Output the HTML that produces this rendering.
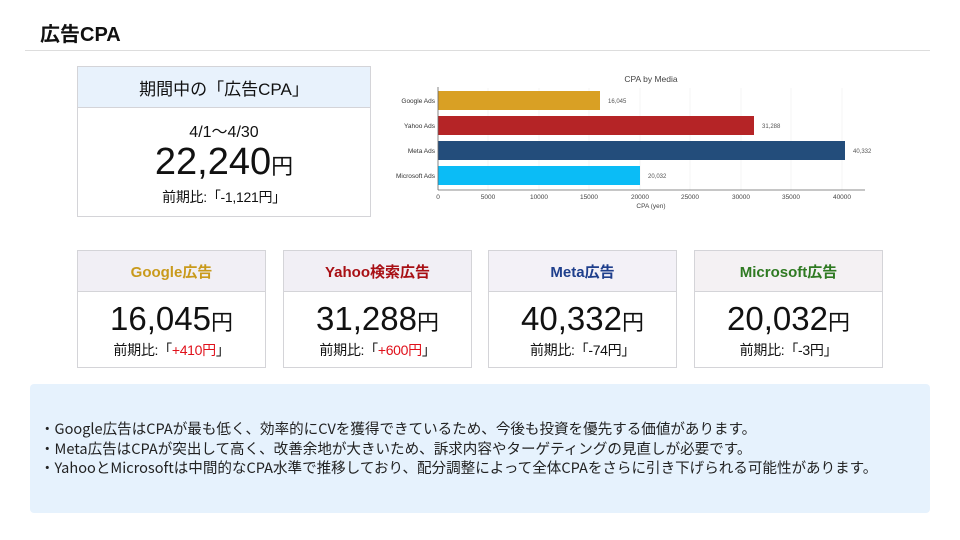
<!DOCTYPE html>
<html><head><meta charset="utf-8"><style>
*{margin:0;padding:0;box-sizing:border-box}
body{width:960px;height:540px;background:#fff;position:relative;overflow:hidden;font-family:"Liberation Sans","Noto Sans CJK JP",sans-serif;color:#111}
.abs{position:absolute}
h1{position:absolute;left:40px;top:18px;font-size:20px;font-weight:bold;font-family:"Liberation Sans","Noto Sans CJK JP",sans-serif}
.sep{position:absolute;left:25px;top:50px;width:905px;height:1px;background:#ddd}
.box{position:absolute;border:1px solid #d4d4d8;background:#fff}
.hd{height:41px;border-bottom:1px solid #d4d4d8;display:flex;align-items:center;justify-content:center;font-size:15px;font-weight:bold}
.c{text-align:center}
.num{font-size:33px;line-height:36px;margin-top:9px}
.num span{font-size:22px}
.cmp{font-size:14px;line-height:18px;margin-top:0;letter-spacing:-0.3px}
.red{color:#e0101a}
.note{position:absolute;left:30px;top:384px;width:900px;height:129px;background:#e6f2fd;border-radius:4px;padding:35px 0 0 10px;font-family:"Noto Sans CJK JP",sans-serif;font-size:14.55px;line-height:19.5px;color:#222;white-space:nowrap}
</style></head><body>
<h1>広告CPA</h1>
<div class="sep"></div>

<div class="box" style="left:77px;top:66px;width:294px;height:151px">
 <div class="hd" style="background:#e8f2fc;font-weight:normal;font-size:17px">期間中の「広告CPA」</div>
 <div class="c" style="font-size:16px;margin-top:10px">4/1～4/30</div>
 <div class="c" style="font-size:38px;line-height:40px;margin-top:0px">22,240<span style="font-size:22px">円</span></div>
 <div class="c" style="font-size:14px;margin-top:0px;letter-spacing:-0.3px">前期比:「-1,121円」</div>
</div>

<svg class="abs" style="left:380px;top:65px" width="500" height="150" font-family="Liberation Sans, sans-serif">
 <text x="271" y="17" font-size="8.5" fill="#444" text-anchor="middle">CPA by Media</text>
 <g stroke="#eee" stroke-width="0.6">
  <line x1="108" y1="23" x2="108" y2="125"/><line x1="159" y1="23" x2="159" y2="125"/><line x1="209" y1="23" x2="209" y2="125"/><line x1="260" y1="23" x2="260" y2="125"/><line x1="310" y1="23" x2="310" y2="125"/><line x1="361" y1="23" x2="361" y2="125"/><line x1="411" y1="23" x2="411" y2="125"/><line x1="462" y1="23" x2="462" y2="125"/>
 </g>
 <rect x="58" y="26" width="162" height="19" fill="#d9a024"/>
 <rect x="58" y="51" width="316" height="19" fill="#b52426"/>
 <rect x="58" y="76" width="407" height="19" fill="#234d7b"/>
 <rect x="58" y="101" width="202" height="19" fill="#0bbcf6"/>
 <line x1="58" y1="22" x2="58" y2="125" stroke="#666" stroke-width="0.8"/>
 <line x1="58" y1="125" x2="485" y2="125" stroke="#666" stroke-width="0.8"/>
 <g font-size="6.5" fill="#333" text-anchor="end">
  <text x="55" y="38">Google Ads</text><text x="55" y="63">Yahoo Ads</text><text x="55" y="88">Meta Ads</text><text x="55" y="113">Microsoft Ads</text>
 </g>
 <g font-size="6" fill="#555">
  <text x="228" y="38">16,045</text><text x="382" y="63">31,288</text><text x="473" y="88">40,332</text><text x="268" y="113">20,032</text>
 </g>
 <g font-size="6.5" fill="#444" text-anchor="middle">
  <text x="58" y="134">0</text><text x="108" y="134">5000</text><text x="159" y="134">10000</text><text x="209" y="134">15000</text><text x="260" y="134">20000</text><text x="310" y="134">25000</text><text x="361" y="134">30000</text><text x="411" y="134">35000</text><text x="462" y="134">40000</text>
  <text x="271" y="143">CPA (yen)</text>
 </g>
</svg>

<div class="box" style="left:77px;top:250px;width:189px;height:118px">
 <div class="hd" style="background:#f1eff5;color:#c99a1c">Google広告</div>
 <div class="c num">16,045<span>円</span></div>
 <div class="c cmp">前期比:「<span class="red">+410円</span>」</div>
</div>
<div class="box" style="left:283px;top:250px;width:189px;height:118px">
 <div class="hd" style="background:#f1eff5;color:#a80f14">Yahoo検索広告</div>
 <div class="c num">31,288<span>円</span></div>
 <div class="c cmp">前期比:「<span class="red">+600円</span>」</div>
</div>
<div class="box" style="left:488px;top:250px;width:189px;height:118px">
 <div class="hd" style="background:#f3f1f7;color:#1f3f8c">Meta広告</div>
 <div class="c num">40,332<span>円</span></div>
 <div class="c cmp">前期比:「-74円」</div>
</div>
<div class="box" style="left:694px;top:250px;width:189px;height:118px">
 <div class="hd" style="background:#f4f1f3;color:#2f7a22">Microsoft広告</div>
 <div class="c num">20,032<span>円</span></div>
 <div class="c cmp">前期比:「-3円」</div>
</div>

<div class="note">
・Google広告はCPAが最も低く、効率的にCVを獲得できているため、今後も投資を優先する価値があります。<br>
・Meta広告はCPAが突出して高く、改善余地が大きいため、訴求内容やターゲティングの見直しが必要です。<br>
・YahooとMicrosoftは中間的なCPA水準で推移しており、配分調整によって全体CPAをさらに引き下げられる可能性があります。
</div>
</body></html>
